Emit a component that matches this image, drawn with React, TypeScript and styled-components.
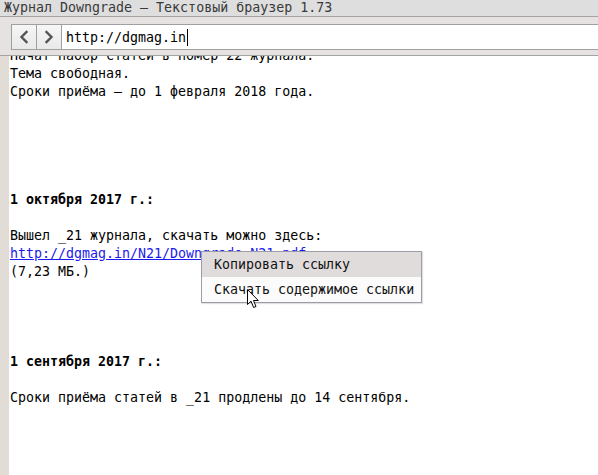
import React from "react";
import styled, { createGlobalStyle } from "styled-components";

const Global = createGlobalStyle`
  html, body { margin: 0; padding: 0; background: #ffffff; }
  body { font-family: "DejaVu Sans Mono", "Liberation Mono", monospace; }
`;

const MONO = `"DejaVu Sans Mono", "Liberation Mono", monospace`;

const Window = styled.div`
  position: relative;
  width: 598px;
  height: 475px;
  display: flex;
  flex-direction: column;
  overflow: hidden;
  background: #ffffff;
  font-family: ${MONO};
  font-size: 13.3px;
`;

const TitleBar = styled.div`
  height: 16px;
  line-height: 15px;
  padding-left: 4px;
  background: #dedede;
  color: #3a3a3a;
  border-bottom: 1px solid #a4a4a4;
  white-space: nowrap;
`;

const Toolbar = styled.div`
  display: flex;
  align-items: stretch;
  padding: 7px 0 5px 11px;
  background: #e6e2e2;
  border-bottom: 1px solid #a4a4a4;
`;

const NavGroup = styled.div`
  display: flex;
  height: 24px;
  border: 1px solid #a0a0a0;
  border-right: none;
  background: linear-gradient(#f6f6f6, #e9e9e9);
`;

const NavButton = styled.div`
  width: 24px;
  display: flex;
  align-items: center;
  justify-content: center;
  border-right: 1px solid #a0a0a0;
  color: #555555;
`;

const UrlField = styled.div`
  flex: 1;
  display: flex;
  align-items: center;
  height: 24px;
  padding-left: 4px;
  background: #ffffff;
  border-top: 1px solid #a0a0a0;
  border-bottom: 1px solid #a0a0a0;
  color: #000000;
  white-space: nowrap;
`;

const Caret = styled.span`
  display: inline-block;
  width: 1px;
  height: 17px;
  margin-left: 1px;
  background: #000000;
  vertical-align: middle;
`;

const Body = styled.div`
  flex: 1;
  display: flex;
  min-height: 0;
`;

const Gutter = styled.div`
  width: 9px;
  background: #e1dcd5;
`;

const Page = styled.div`
  flex: 1;
  overflow: hidden;
  padding-left: 1px;
`;

const Scroll = styled.div`
  margin-top: -9px;
`;

const Line = styled.div<{ $before?: number; $bold?: boolean }>`
  height: 18px;
  line-height: 18px;
  margin-top: ${(p) => (p.$before ?? 0) * 18}px;
  font-weight: ${(p) => (p.$bold ? 700 : 400)};
  color: #000000;
  white-space: nowrap;
`;

const Link = styled.a`
  color: #1a1aee;
  text-decoration: underline;
`;

const Menu = styled.div`
  position: absolute;
  left: 201px;
  top: 251px;
  width: 219px;
  background: #fbfbfb;
  border: 1px solid #9c9ca8;
  box-shadow: 1px 1px 1px rgba(0, 0, 0, 0.12);
  display: flex;
  flex-direction: column;
`;

const MenuItem = styled.div<{ $active?: boolean }>`
  height: 25px;
  line-height: 25px;
  padding-left: 12px;
  background: ${(p) => (p.$active ? "#e1dcdc" : "transparent")};
  color: #111111;
  white-space: nowrap;
`;

const Pointer = styled.svg`
  position: absolute;
  left: 247px;
  top: 289px;
`;

const Chevron = ({ dir }: { dir: "left" | "right" }) => (
  <svg width="10" height="14" viewBox="0 0 10 14">
    <path
      d={dir === "left" ? "M7.5 2 L2.5 7 L7.5 12" : "M2.5 2 L7.5 7 L2.5 12"}
      fill="none"
      stroke="#555555"
      strokeWidth="2.4"
      strokeLinecap="square"
    />
  </svg>
);

export default function App() {
  return (
    <>
      <Global />
      <Window>
        <TitleBar>Журнал Downgrade – Текстовый браузер 1.73</TitleBar>
        <Toolbar>
          <NavGroup>
            <NavButton>
              <Chevron dir="left" />
            </NavButton>
            <NavButton>
              <Chevron dir="right" />
            </NavButton>
          </NavGroup>
          <UrlField>
            http://dgmag.in
            <Caret />
          </UrlField>
        </Toolbar>
        <Body>
          <Gutter />
          <Page>
            <Scroll>
              <Line>Начат набор статей в номер 22 журнала.</Line>
              <Line>Тема свободная.</Line>
              <Line>Сроки приёма – до 1 февраля 2018 года.</Line>
              <Line $before={5} $bold>
                1 октября 2017 г.:
              </Line>
              <Line $before={1}>Вышел _21 журнала, скачать можно здесь:</Line>
              <Line>
                <Link>http://dgmag.in/N21/Downgrade_N21.pdf</Link>
              </Line>
              <Line>(7,23 МБ.)</Line>
              <Line $before={4} $bold>
                1 сентября 2017 г.:
              </Line>
              <Line $before={1}>Сроки приёма статей в _21 продлены до 14 сентября.</Line>
            </Scroll>
          </Page>
        </Body>
        <Menu>
          <MenuItem $active>Копировать ссылку</MenuItem>
          <MenuItem>Скачать содержимое ссылки</MenuItem>
        </Menu>
        <Pointer width="13" height="20" viewBox="0 0 13 20">
          <path
            d="M0.5 0.5 L0.5 15.5 L4 12.2 L6.6 18.5 L9 17.5 L6.5 11.5 L11.3 11.5 Z"
            fill="#ffffff"
            stroke="#000000"
            strokeWidth="1"
            strokeLinejoin="miter"
          />
        </Pointer>
      </Window>
    </>
  );
}
